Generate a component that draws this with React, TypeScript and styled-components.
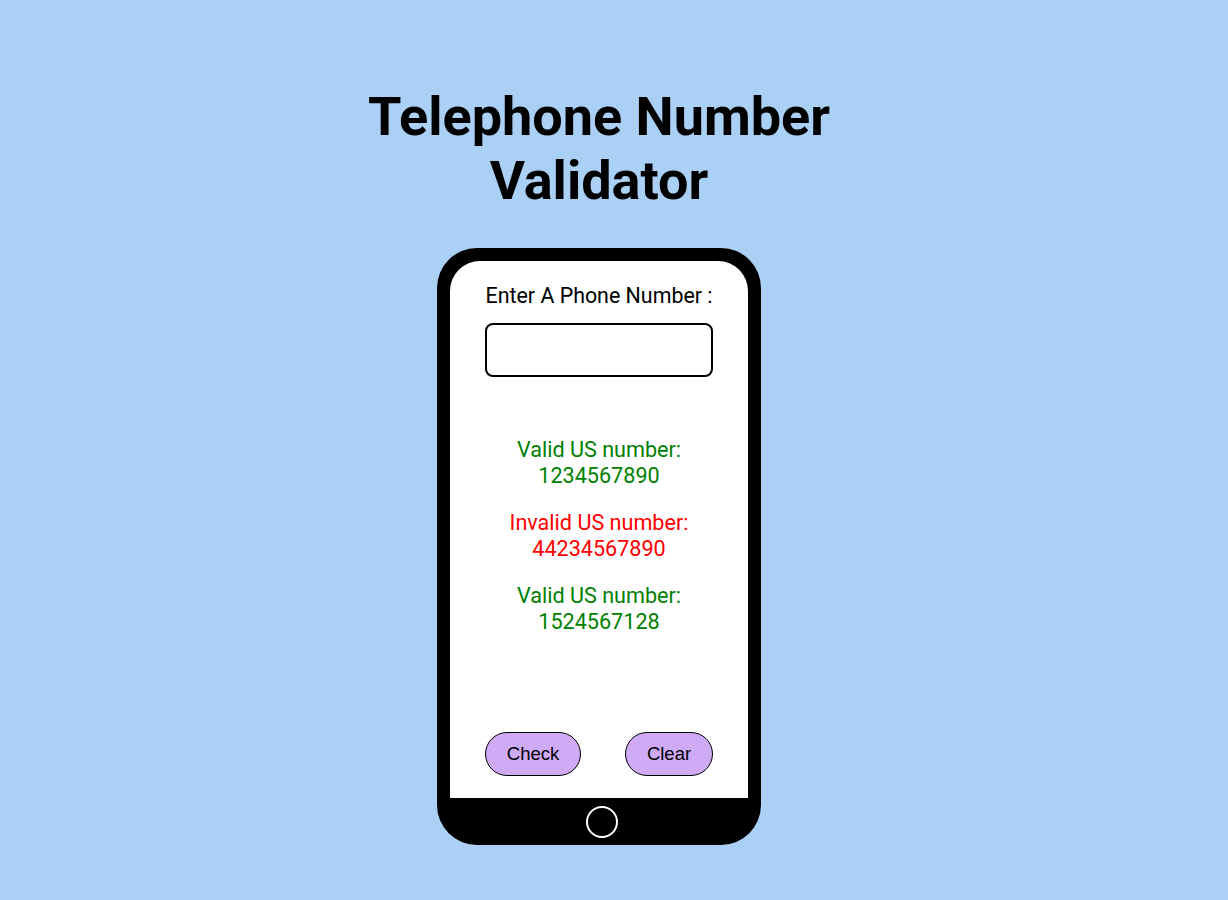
import React from 'react';
import styled, { createGlobalStyle } from 'styled-components';

const GlobalStyle = createGlobalStyle`
  body {
    margin: 0;
    background-color: #aad1f5;
    font-family: Roboto, 'Liberation Sans', sans-serif;
  }
`;

const Page = styled.div`
  display: flex;
  flex-direction: column;
  align-items: center;
  width: 100%;
  min-height: 900px;
  box-sizing: border-box;
  padding: 85px 30px 0 0;
`;

const Title = styled.h1`
  margin: 0 0 35px;
  max-width: 500px;
  text-align: center;
  font-size: 54px;
  font-weight: 700;
  line-height: 64px;
  color: #000;
`;

const Phone = styled.div`
  display: flex;
  flex-direction: column;
  width: 324px;
  height: 597px;
  box-sizing: border-box;
  padding: 13px 13px 0;
  background-color: #000;
  border-radius: 40px;
`;

const Screen = styled.div`
  flex: 1;
  display: flex;
  flex-direction: column;
  align-items: center;
  padding: 22px 35px 22px;
  background-color: #fff;
  border-radius: 30px 30px 0 0;
`;

const Label = styled.label`
  font-size: 21.4px;
  line-height: 25px;
  white-space: nowrap;
  color: #000;
`;

const Input = styled.input`
  width: 228px;
  height: 54px;
  margin-top: 15px;
  box-sizing: border-box;
  border: 2px solid #000;
  border-radius: 8px;
  font-size: 20px;
  padding: 0 10px;
  :focus {
    outline: none;
  }
`;

const Results = styled.div`
  flex: 1;
  display: flex;
  flex-direction: column;
  align-items: center;
  gap: 21px;
  padding-top: 60px;
`;

const Result = styled.p<{ valid: boolean }>`
  margin: 0;
  text-align: center;
  font-size: 21.6px;
  line-height: 26px;
  color: ${(props) => (props.valid ? '#008000' : '#ff0000')};
`;

const ButtonRow = styled.div`
  display: flex;
  justify-content: space-between;
  width: 228px;
`;

const Button = styled.button<{ wide?: boolean }>`
  width: ${(props) => (props.wide ? '96px' : '88px')};
  height: 44px;
  border: 1px solid #000;
  border-radius: 22px;
  background-color: #cfaaf5;
  font-family: 'Liberation Sans', Arial, sans-serif;
  font-size: 18.5px;
  color: #000;
  cursor: pointer;
`;

const HomeBar = styled.div`
  display: flex;
  justify-content: center;
  align-items: center;
  height: 47px;
`;

const HomeButton = styled.div`
  width: 32px;
  height: 32px;
  margin-left: 5px;
  box-sizing: border-box;
  border: 2px solid #fff;
  border-radius: 50%;
`;

const results = [
  { valid: true, number: '1234567890' },
  { valid: false, number: '44234567890' },
  { valid: true, number: '1524567128' },
];

const App: React.FC = () => {
  return (
    <Page>
      <GlobalStyle />
      <Title>Telephone Number Validator</Title>
      <Phone>
        <Screen>
          <Label htmlFor="user-input">Enter A Phone Number :</Label>
          <Input id="user-input" type="text" />
          <Results>
            {results.map((r, index) => (
              <Result key={index} valid={r.valid}>
                {r.valid ? 'Valid' : 'Invalid'} US number:
                <br />
                {r.number}
              </Result>
            ))}
          </Results>
          <ButtonRow>
            <Button wide>Check</Button>
            <Button>Clear</Button>
          </ButtonRow>
        </Screen>
        <HomeBar>
          <HomeButton />
        </HomeBar>
      </Phone>
    </Page>
  );
};

export default App;
